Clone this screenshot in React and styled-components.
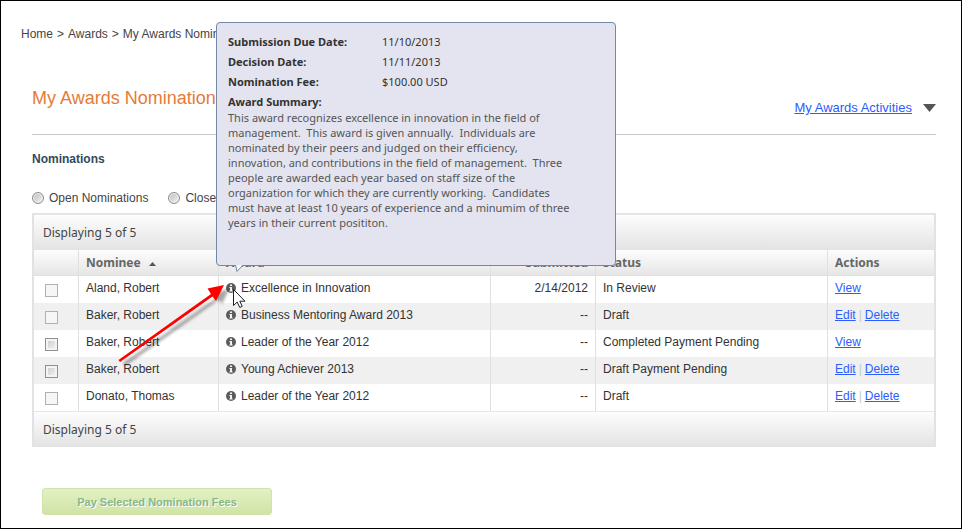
import React from "react";
import styled, { createGlobalStyle } from "styled-components";

const GlobalStyle = createGlobalStyle`
  * {
    box-sizing: border-box;
  }

  body {
    margin: 0;
    background-color: #ffffff;
    color: #333333;
    font-family: "Liberation Sans", Arial, sans-serif;
    font-size: 12px;
    line-height: 16px;
  }
`;

const Page = styled.div`
  min-height: 100vh;
  padding: 25px 25px 12px 20px;
  border: 1px solid #000000;
  overflow: hidden;
`;

const Breadcrumb = styled.nav`
  display: flex;
  gap: 4px;
  color: #444444;
  white-space: nowrap;
`;

const Crumb = styled.a`
  color: inherit;
  text-decoration: none;
`;

const Main = styled.main`
  margin: 44px 0 0 11px;
`;

const TitleBar = styled.header`
  display: flex;
  justify-content: space-between;
  align-items: flex-start;
  height: 49px;
  border-bottom: 1px solid #c8c8c8;
`;

const Title = styled.h1`
  margin: 0;
  color: #e57b37;
  font-size: 18px;
  font-weight: normal;
  line-height: 24px;
`;

const Activities = styled.div`
  display: flex;
  align-items: center;
  gap: 11px;
  padding-top: 14px;
`;

const Link = styled.a`
  color: #2a5cff;
  font-size: ${(props) => (props.$large ? "13px" : "12px")};
  text-decoration: underline;
`;

const MenuButton = styled.button`
  display: flex;
  padding: 0;
  border: 0;
  background: none;
`;

const SectionTitle = styled.h2`
  margin: 16px 0 0;
  color: #34495a;
  font-size: 12px;
  line-height: 16px;
`;

const Filters = styled.div`
  display: flex;
  gap: 20px;
  margin-top: 23px;
`;

const FilterLabel = styled.label`
  display: flex;
  align-items: center;
  gap: 5px;
  color: #444444;
  white-space: nowrap;
`;

const Radio = styled.input`
  appearance: none;
  width: 12px;
  height: 12px;
  margin: 0;
  border: 1px solid #8c8c8c;
  border-radius: 50%;
  background: linear-gradient(135deg, #b9bcc0, #f4f4f4);
  box-shadow: inset 0 0 0 1px #f4f4f4;
`;

const Panel = styled.section`
  margin-top: 7px;
  border: 2px solid #e2e2e2;
  border-top-width: 1px;
  border-bottom: 0;
`;

const Bar = styled.div`
  height: 36px;
  padding: 9px;
  border-top: 1px solid #e6e6e6;
  background: linear-gradient(#fdfdfd, #e3e3e3);
  color: #444444;
  font-family: "Noto Sans", sans-serif;
  font-size: 12px;
  line-height: 18px;
`;

const Table = styled.table`
  width: 100%;
  table-layout: fixed;
  border-collapse: separate;
  border-spacing: 0;
`;

const Col = styled.col`
  width: ${(props) => props.$width};
`;

const Th = styled.th`
  height: 26px;
  padding: 0 7px;
  border-right: 1px solid #e0e0e0;
  border-bottom: 1px solid #e0e0e0;
  background: linear-gradient(#fdfdfd, #e6e6e6);
  color: #666666;
  font-family: "Noto Sans", sans-serif;
  font-size: 12px;
  text-align: ${(props) => props.$align || "left"};

  &:last-child {
    border-right: 0;
  }
`;

const Row = styled.tr`
  &:nth-child(even) {
    background-color: #f0f0f0;
  }
`;

const Td = styled.td`
  height: 27px;
  padding: 0 7px 3px;
  border-right: 1px solid #e0e0e0;
  text-align: ${(props) => props.$align || "left"};
  white-space: nowrap;

  &:last-child {
    border-right: 0;
  }
`;

const CheckCell = styled(Td)`
  padding: 1px 11px 0;
`;

const Checkbox = styled.input`
  appearance: none;
  display: block;
  width: 13px;
  height: 13px;
  margin: 0;
  border: 1px solid #8e8f8f;
  background: linear-gradient(135deg, #c3c8ce, #f6f6f6);
  box-shadow: inset 0 0 0 2px #f4f4f4;

  &:disabled {
    border-color: #b1b1b1;
    background: #f6f6f6;
    box-shadow: none;
  }
`;

const SortArrow = styled.svg`
  margin-left: 8px;
  vertical-align: 1px;
`;

const Award = styled.div`
  display: flex;
  align-items: center;
  gap: 5px;
`;

const InfoButton = styled.button`
  display: flex;
  padding: 0;
  border: 0;
  background: none;
`;

const InfoAnchor = styled.span`
  position: relative;
`;

const Tooltip = styled.div`
  position: absolute;
  z-index: 1;
  bottom: 27px;
  left: -10px;
  width: 400px;
  height: 244px;
  padding: 9px 11px;
  border: 1px solid #7388a5;
  border-radius: 4px;
  background-color: #e4e4f0;
  color: #555555;
  font-family: "Noto Sans", sans-serif;
  font-size: 11px;
  line-height: 15px;
  white-space: normal;
`;

const Facts = styled.dl`
  display: grid;
  grid-template-columns: 154px 1fr;
  margin: 0;
  color: #333333;
  line-height: 20px;

  dt {
    font-weight: bold;
  }

  dd {
    margin: 0;
  }
`;

const SummaryTitle = styled.h3`
  margin: 0;
  color: #333333;
  font-size: 11px;
  line-height: 16px;
  padding-top: 2px;
`;

const Summary = styled.p`
  margin: 0;
  white-space: pre-line;
`;

const Tail = styled.svg`
  position: absolute;
  top: 100%;
  left: 17px;
`;

const Pointer = styled.svg`
  position: absolute;
  z-index: 2;
  top: -6px;
  left: -111px;
  pointer-events: none;
`;

const Separator = styled.span`
  margin: 0 3px;
  color: #b9cfc4;
`;

const PayButton = styled.button`
  display: block;
  width: 230px;
  height: 27px;
  margin: 41px 0 0 10px;
  padding: 0;
  border: 1px solid #d0e3ab;
  border-radius: 3px;
  background: linear-gradient(#e4f0c5, #cfe4a5);
  color: #87b787;
  font-family: inherit;
  font-size: 11px;
  font-weight: bold;
  text-shadow: 1px 1px 0 #ffffff;
`;

const nominations = [
  { name: "Aland, Robert", award: "Excellence in Innovation", submitted: "2/14/2012", status: "In Review", actions: ["View"] },
  { name: "Baker, Robert", award: "Business Mentoring Award 2013", submitted: "--", status: "Draft", actions: ["Edit", "Delete"] },
  { name: "Baker, Robert", award: "Leader of the Year 2012", submitted: "--", status: "Completed Payment Pending", actions: ["View"], payable: true },
  { name: "Baker, Robert", award: "Young Achiever 2013", submitted: "--", status: "Draft Payment Pending", actions: ["Edit", "Delete"], payable: true },
  { name: "Donato, Thomas", award: "Leader of the Year 2012", submitted: "--", status: "Draft", actions: ["Edit", "Delete"] },
];

const InfoIcon = () => (
  <svg width="10" height="10" viewBox="0 0 10 10" aria-hidden="true">
    <circle cx="5" cy="5" r="5" fill="#5c5c5c" />
    <path d="M4 1.5h2v1.4H4zM3.4 4H6v3.4h.7v1H3.3v-1H4V5h-.6z" fill="#f2f2f2" />
  </svg>
);

const AwardTooltip = () => (
  <Tooltip role="tooltip">
    <Facts>
      <dt>Submission Due Date:</dt>
      <dd>11/10/2013</dd>
      <dt>Decision Date:</dt>
      <dd>11/11/2013</dd>
      <dt>Nomination Fee:</dt>
      <dd>$100.00 USD</dd>
    </Facts>
    <SummaryTitle>Award Summary:</SummaryTitle>
    <Summary>
      {`This award recognizes excellence in innovation in the field of
      management.\u00a0 This award is given annually.\u00a0 Individuals are
      nominated by their peers and judged on their efficiency,
      innovation, and contributions in the field of management.\u00a0 Three
      people are awarded each year based on staff size of the
      organization for which they are currently working.\u00a0 Candidates
      must have at least 10 years of experience and a minumim of three
      years in their current posititon.`}
    </Summary>
    <Tail width="10" height="8" viewBox="0 0 10 8">
      <path d="M1.5 0L3 6.5L9 0" fill="#f7f7fb" stroke="#7388a5" />
    </Tail>
  </Tooltip>
);

const PointerArrow = () => (
  <Pointer width="136" height="96" viewBox="0 0 136 96" aria-hidden="true">
    <defs>
      <filter id="soft" x="-20%" y="-20%" width="140%" height="140%">
        <feGaussianBlur stdDeviation="1.6" />
      </filter>
    </defs>
    <g transform="translate(5 4)" fill="#000000" opacity="0.35" filter="url(#soft)">
      <path d="M3 82L97 16.5L94 12L109 8L102 23L98.5 19L5 85z" />
    </g>
    <path d="M3.5 83L96 17L92.5 11.5L109 8L101 24L97.5 19.5L5 85z" fill="#ff0000" />
    <path
      d="M118.5 12.5V28.5L122.2 25L124.8 30.5L127.2 29.3L124.8 24.2H130z"
      fill="#ffffff"
      stroke="#1d1d2b"
    />
  </Pointer>
);

const Nomination = ({ item, open }) => (
  <Row>
    <CheckCell>
      <Checkbox type="checkbox" disabled={!item.payable} aria-label={`Select ${item.name}`} />
    </CheckCell>
    <Td>{item.name}</Td>
    <Td>
      <Award>
        <InfoAnchor>
          <InfoButton type="button" aria-label="Award details">
            <InfoIcon />
          </InfoButton>
          {open && <AwardTooltip />}
          {open && <PointerArrow />}
        </InfoAnchor>
        {item.award}
      </Award>
    </Td>
    <Td $align="right">{item.submitted}</Td>
    <Td>{item.status}</Td>
    <Td>
      {item.actions.map((action, index) => (
        <React.Fragment key={action}>
          {index > 0 && <Separator>|</Separator>}
          <Link href="#">{action}</Link>
        </React.Fragment>
      ))}
    </Td>
  </Row>
);

const App = () => {
  return (
    <>
      <GlobalStyle />
      <Page>
        <Breadcrumb>
          <Crumb href="#">Home</Crumb>
          <span>&gt;</span>
          <Crumb href="#">Awards</Crumb>
          <span>&gt;</span>
          <span>My Awards Nominations</span>
        </Breadcrumb>

        <Main>
          <TitleBar>
            <Title>My Awards Nominations</Title>
            <Activities>
              <Link $large href="#">My Awards Activities</Link>
              <MenuButton type="button" aria-label="Open activities">
                <svg width="13" height="8" viewBox="0 0 13 8">
                  <path d="M0 0H13L6.5 8z" fill="#555555" />
                </svg>
              </MenuButton>
            </Activities>
          </TitleBar>

          <SectionTitle>Nominations</SectionTitle>
          <Filters>
            <FilterLabel>
              <Radio type="radio" name="filter" />
              Open Nominations
            </FilterLabel>
            <FilterLabel>
              <Radio type="radio" name="filter" />
              Closed Nominations
            </FilterLabel>
          </Filters>

          <Panel>
            <Bar>Displaying 5 of 5</Bar>
            <Table>
              <colgroup>
                <Col $width="45px" />
                <Col $width="140px" />
                <Col />
                <Col $width="105px" />
                <Col $width="232px" />
                <Col $width="106px" />
              </colgroup>
              <thead>
                <tr>
                  <Th />
                  <Th>
                    Nominee
                    <SortArrow width="7" height="4" viewBox="0 0 7 4">
                      <path d="M0 4L3.5 0L7 4z" fill="#555555" />
                    </SortArrow>
                  </Th>
                  <Th>Award</Th>
                  <Th $align="right">Submitted</Th>
                  <Th>Status</Th>
                  <Th>Actions</Th>
                </tr>
              </thead>
              <tbody>
                {nominations.map((item, index) => (
                  <Nomination key={index} item={item} open={index === 0} />
                ))}
              </tbody>
            </Table>
            <Bar>Displaying 5 of 5</Bar>
          </Panel>

          <PayButton type="button">Pay Selected Nomination Fees</PayButton>
        </Main>
      </Page>
    </>
  );
};

export default App;
